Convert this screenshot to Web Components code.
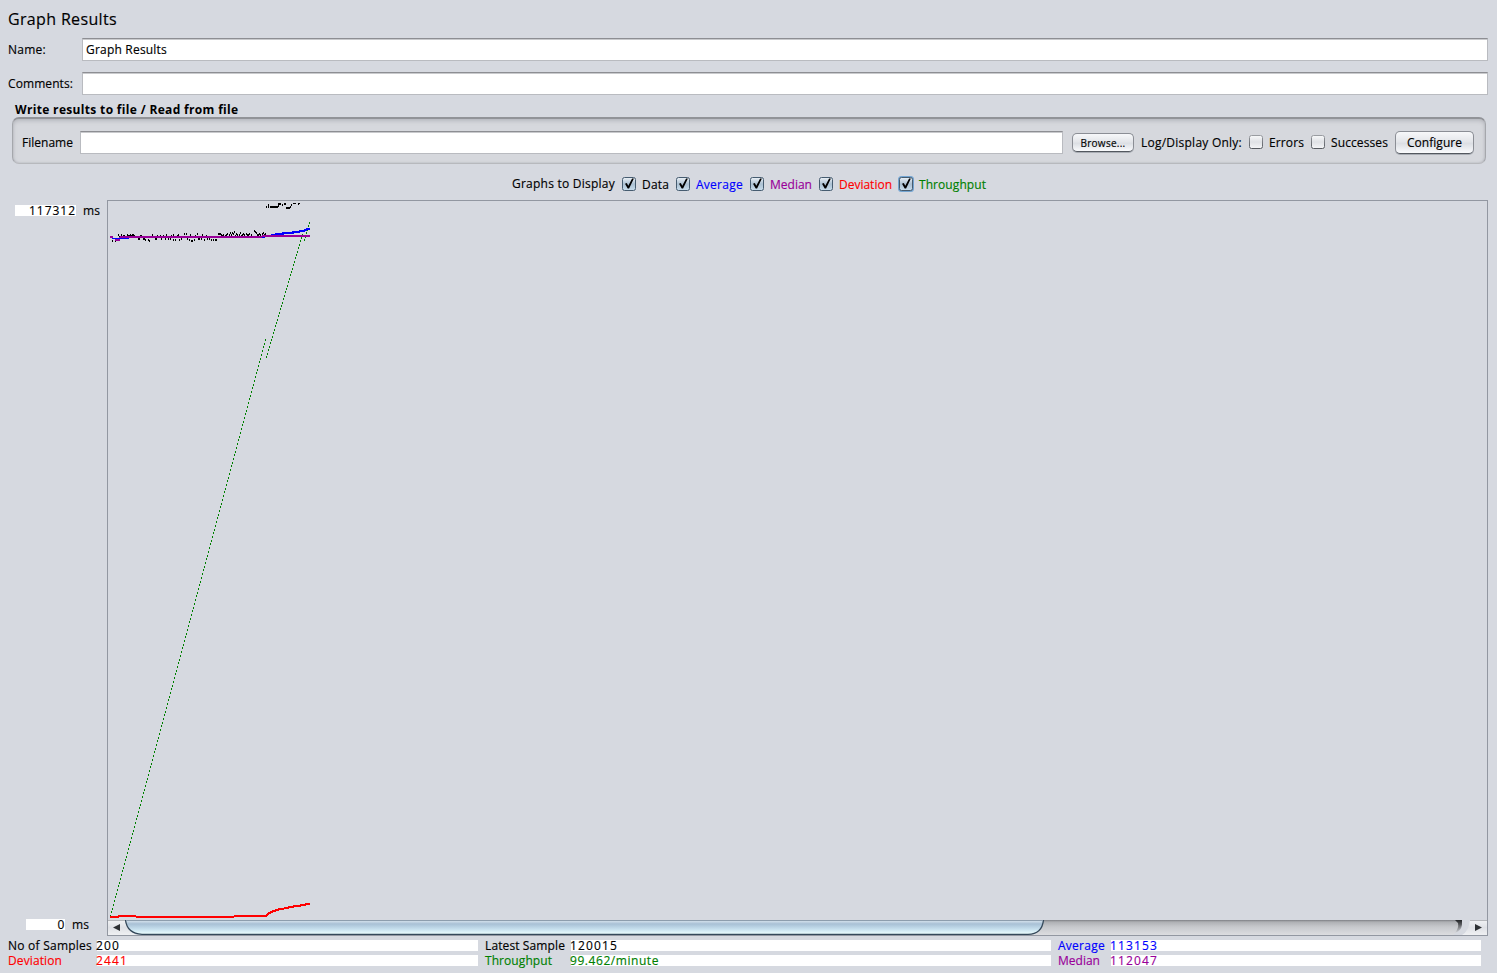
<!DOCTYPE html>
<html lang="en">
<head>
<meta charset="utf-8">
<title>Graph Results</title>
<style>
html,body{margin:0;height:100%;background:#d6d9e0;overflow:hidden}
body{font:12px/16px "Open Sans","Noto Sans",sans-serif;color:#000}
</style>
</head>
<body>
<results-panel></results-panel>
<script>
const define = (name, html, setup) => customElements.define(name, class extends HTMLElement {
  connectedCallback() {
    if (this.shadowRoot) return;
    const root = this.attachShadow({mode: 'open'});
    const t = document.createElement('template');
    t.innerHTML = html;
    root.append(t.content.cloneNode(true));
    if (setup) setup(this, root);
  }
});

/* Text label whose letter spacing is spread over a given width. */
define('fit-text', `<style>
:host{display:block;white-space:pre;flex:none;-webkit-text-stroke:.15px currentColor}
span{display:inline-block}
</style><span><slot></slot></span>`, (el, root) => {
  const w = +el.getAttribute('w');
  const span = root.querySelector('span');
  const n = el.textContent.length;
  const natural = span.getBoundingClientRect().width;
  span.style.letterSpacing = ((w - natural) / n).toFixed(3) + 'px';
  el.style.width = w + 'px';
});

define('text-field', `<style>
:host{display:flex;box-sizing:border-box;height:23px;align-items:center;background:#fff;border:1px solid #b9bbc0;border-top-color:#8d8e93;box-shadow:inset 0 1px 0 #c9cacd;padding:0 0 0 3px;min-width:0}
</style><slot></slot>`);

define('push-button', `<style>
:host{display:flex;box-sizing:border-box;align-items:center;justify-content:center;border:1px solid #8b8e95;border-bottom-color:#53585f;border-radius:5px;background:linear-gradient(#f7f8fa,#e4e6ea 45%,#dcdfe4 55%,#fafbfd);box-shadow:0 1px 0 #a9adb4;flex:none}
</style><slot></slot>`);

define('check-box', `<style>
:host{display:block;width:15px;height:15px;flex:none}
svg{display:block;overflow:visible}
.on,.ring{display:none}
:host([checked]) .on{display:inline}
:host([focused]) .ring{display:inline}
:host([checked]) .off{display:none}
</style><svg width="15" height="15" viewBox="0 0 15 15">
<defs><linearGradient id="a" x2="0" y2="1"><stop stop-color="#f8f9fa"/><stop offset=".5" stop-color="#dfe1e5"/><stop offset="1" stop-color="#f4f5f7"/></linearGradient>
<linearGradient id="b" x2="0" y2="1"><stop stop-color="#edf2f7"/><stop offset=".5" stop-color="#abc0d2"/><stop offset="1" stop-color="#c9deed"/></linearGradient>
<linearGradient id="c" x2="0" y2="1"><stop stop-color="#999ca1"/><stop offset="1" stop-color="#565a60"/></linearGradient></defs>
<rect class="ring" x="-1" y="-1" width="16" height="16" rx="3.5" fill="#73a4d1"/>
<rect class="off" x=".5" y=".5" width="13" height="13" rx="2" fill="url(#a)" stroke="url(#c)"/>
<g class="on"><rect x=".5" y=".5" width="13" height="13" rx="2" fill="url(#b)" stroke="#465c70"/>
<path d="M3 6.8 4.8 6 6.3 8.8 10.1 1.4H11.9L7.1 11.6H5.7Z" fill="#000"/></g></svg>`);

define('results-header', `<style>
:host{display:block;padding:9px 9px 0 8px}
.title{font-size:16px;line-height:20px;height:29px}
.row{display:flex;height:23px;margin-bottom:11px;align-items:center}
.row fit-text.l{margin-right:auto}
.row text-field{width:1406px}
</style>
<div class="title"><fit-text w="109">Graph Results</fit-text></div>
<div class="row"><fit-text class="l" w="38">Name:</fit-text><text-field><fit-text w="81">Graph Results</fit-text></text-field></div>
<div class="row"><fit-text class="l" w="65">Comments:</fit-text><text-field></text-field></div>`);

define('file-panel', `<style>
:host{display:flow-root;height:61px;margin:-4px 11px 0 12px}
.t{font-weight:700;padding-left:3px;height:15px;line-height:16px}
.t fit-text{-webkit-text-stroke:0}
.box{display:flex;align-items:center;box-sizing:border-box;height:47px;padding:3px 11px 0 9px;border:1px solid #a5a7ac;border-top:2px solid #919398;border-bottom-color:#b7b9bd;border-radius:7px;background:#d6d8dd;box-shadow:inset 0 2px 4px #b7b9bf,inset 0 0 2px #b0b2b7}
.box>text-field{width:983px;margin:0 9px 0 7px}
</style>
<div class="t"><fit-text w="223.5">Write results to file / Read from file</fit-text></div>
<div class="box"><fit-text w="51">Filename</fit-text><text-field></text-field>
<push-button style="width:62px;height:19px;font-size:10px"><fit-text w="45">Browse...</fit-text></push-button>
<fit-text w="101" style="margin:0 7px">Log/Display Only:</fit-text>
<check-box></check-box><fit-text w="35" style="margin:0 7px 0 5px">Errors</fit-text>
<check-box></check-box><fit-text w="57" style="margin:0 7px 0 5px">Successes</fit-text>
<push-button style="width:79px;height:23px"><fit-text w="55">Configure</fit-text></push-button></div>`);

define('series-toggles', `<style>
:host{display:flex;height:18px;align-items:center;padding:12px 0 0 512px}
.lead{margin:-1px 7px 0 0}
.i{margin:1px 7px 0 5px}
</style>
<fit-text class="lead" w="103">Graphs to Display</fit-text>
<check-box checked></check-box><fit-text class="i" w="27">Data</fit-text>
<check-box checked></check-box><fit-text class="i" w="47" style="color:#00f">Average</fit-text>
<check-box checked></check-box><fit-text class="i" w="42" style="color:#909">Median</fit-text>
<check-box checked></check-box><fit-text class="i" w="53" style="color:red">Deviation</fit-text>
<check-box checked focused></check-box><fit-text class="i" w="67" style="color:#008000">Throughput</fit-text>`);

define('sample-plot', `<style>:host{display:block;height:719px}svg{display:block}</style>
<svg width="1379" height="719" viewBox="108 201 1379 719" shape-rendering="crispEdges">
<path id="data"/><path id="tp" fill="#008000"/>
<path d="M110 236h3v2h-3zM114 238h2v1h-2zM115 239h5v2h-5zM119 237h2v1h-2zM120 236h143v2H120z" fill="#909"/>
<path d="M112 238h17v1h-17zM262 237h3v1h-3zM271 234h7v1h-7zM275 233h9v2h-9zM282 232h6v2h-6zM287 232h7v2h-7zM292 231h8v2h-8zM299 230h6v2h-6zM304 229h3v2h-3zM306 228h4v2h-4z" fill="#00f"/>
<path d="M262 235h48v2h-48z" fill="#909"/>
<path d="M110 916h9v2h-9zM118 915h18v2h-18zM136 916h98v2h-98zM234 915h33v2h-33zM266 914h2v2h-2zM267 913h2v2h-2zM268 912h3v2h-3zM270 911h3v2h-3zM272 910h4v2h-4zM275 909h4v2h-4zM278 908h6v2h-6zM284 907h5v2h-5zM288 906h6v2h-6zM293 905h8v2h-8zM300 904h6v2h-6zM305 903h5v2h-5z" fill="red"/>
</svg>`, (el, root) => {
  const dot = (x, y) => `M${x} ${y}h1v2h-1z`;
  const d = [[112,240],[115,240],[118,234],[119,236],[121,234],[122,236],[123,235],[124,235],[126,236],[127,234],[128,235],[129,235],[130,234],[131,235],[132,234],[133,234],[134,235],[138,238],[139,238],[140,235],[141,235],[143,238],[144,238],[145,239],[148,239],[149,240],[152,234],[155,238],[156,238],[157,235],[160,235],[161,238],[163,235],[165,238],[166,234],[168,238],[170,238],[171,235],[173,234],[173,239],[175,239],[177,235],[178,234],[179,239],[181,238],[184,233],[186,233],[187,238],[189,239],[190,234],[191,240],[192,240],[194,239],[195,235],[197,233],[198,238],[199,238],[201,238],[202,234],[204,239],[206,235],[207,238],[209,238],[211,239],[212,236],[213,239],[215,239],[216,239],[218,233],[219,233],[220,233],[221,234],[222,235],[223,234],[225,235],[226,234],[227,233],[229,234],[230,232],[231,234],[232,232],[233,233],[234,231],[235,235],[236,233],[237,234],[239,234],[240,232],[241,235],[242,234],[243,233],[244,234],[246,233],[247,234],[248,234],[249,233],[251,234],[254,230],[255,231],[256,232],[257,234],[258,234],[259,233],[260,234],[262,233],[263,232],[264,234],[265,233],
  [266,206],[268,204],[268,206],[278,203],[279,203],[280,203],[278,205],[282,204],[284,203],[285,203],[290,206],[291,204],[298,203]];
  for (let x = 270; x < 278; x++) d.push([x, 206]);
  for (let x = 286; x < 290; x++) d.push([x, 207]);
  root.getElementById('data').setAttribute('d', d.map(p => dot(...p)).join('') + 'M293 203h3v1h-3zM298 203h2v1h-2z');
  let t = '';
  for (let x = 110; x <= 265; x++) t += dot(x, Math.round(915 - (x - 110) * 3.716));
  for (let x = 266; x <= 303; x++) t += dot(x, Math.round(356 - (x - 266) * 3.4));
  for (let x = 304; x <= 309; x++) t += dot(x, Math.round(239 - (x - 304) * 3.4));
  root.getElementById('tp').setAttribute('d', t);
});

define('scroll-track', `<style>:host{display:block;height:15px}svg{display:block}</style>
<svg width="1379" height="15" viewBox="0 0 1379 15">
<defs><linearGradient id="t" x2="0" y2="1"><stop stop-color="#7d7f84"/><stop offset=".13" stop-color="#aeb0b4"/><stop offset=".45" stop-color="#c6c8cc"/><stop offset="1" stop-color="#dcdde0"/></linearGradient>
<linearGradient id="h" x2="0" y2="1"><stop stop-color="#dce8f2"/><stop offset=".18" stop-color="#c8d8e6"/><stop offset=".32" stop-color="#a8c0d5"/><stop offset=".65" stop-color="#c5deed"/><stop offset="1" stop-color="#edffff"/></linearGradient>
<linearGradient id="b" x2="0" y2="1"><stop stop-color="#f2f3f5"/><stop offset=".5" stop-color="#dfe1e6"/><stop offset="1" stop-color="#eff0f2"/></linearGradient>
<linearGradient id="e" x2="0" y2="1"><stop stop-color="#25272a"/><stop offset="1" stop-color="#25272a" stop-opacity="0"/></linearGradient></defs>
<path d="M900 0H1354Q1354 9 1345 15H900Z" fill="url(#t)"/>
<path d="M1347 0H1354V5Q1353 11 1347 13Q1351 8 1350 3Z" fill="url(#e)"/>
<path d="M0 0H17Q18 9 28 15H0Z" fill="url(#b)"/><path d="M1362 0H1379V15H1354Q1361 11 1362 0Z" fill="url(#b)"/>
<path d="M17.5 -1H935.5V0Q934 14.3 920 14.3H34Q19 13.5 17.5 0Z" fill="url(#h)" stroke="#34485a" stroke-width="1.3"/>
<path d="M18 .5H935" stroke="#8d9dad"/>
<path d="M5 7.5 12 4V11ZM1374 7.5 1367 4V11Z" fill="#2d3033"/>
<path d="M0 .5H17M1362 .5H1379" stroke="#b5b7bb"/>
</svg>`);

define('graph-area', `<style>
:host{display:flex;height:736px;margin-top:7px}
.axis{width:107px;display:flex;flex-direction:column;justify-content:space-between;flex:none;box-sizing:border-box;padding:2px 0 2px}
.v{display:flex;align-items:flex-start;height:18px}
.v>fit-text{margin-top:1px}
.n{height:11px;background:#fff;display:flex;justify-content:flex-end;align-items:flex-start;margin:3px 7px 0 0}
.n fit-text{margin-top:-2px}
.plot{width:1379px;border:1px solid #9297a1}
</style>
<div class="axis"><div class="v"><div class="n" style="width:61px;margin-left:15px"><fit-text w="47">117312</fit-text></div><fit-text w="17">ms</fit-text></div>
<div class="v"><div class="n" style="width:39px;margin-left:26px"><fit-text w="7.5">0</fit-text></div><fit-text w="17">ms</fit-text></div></div>
<div class="plot"><sample-plot></sample-plot><scroll-track></scroll-track></div>`);

define('stat-line', `<style>
:host{display:grid;grid-template-columns:88px 382px 7px 85px 481px 7px 52px 371px;height:15px;align-items:start;padding-left:8px}
</style><slot></slot>`);

define('summary-stats', `<style>
:host{display:block;padding-top:2px}
.v{background:linear-gradient(#fff,#fff) 1px 0 no-repeat;height:11px;display:flex;align-items:flex-start;margin-top:2px}
.v fit-text{margin-top:-2px}
</style>
<stat-line><fit-text w="84">No of Samples</fit-text><div class="v"><fit-text w="24">200</fit-text></div><i></i>
<fit-text w="80">Latest Sample</fit-text><div class="v"><fit-text w="48">120015</fit-text></div><i></i>
<fit-text w="47" style="color:#00f">Average</fit-text><div class="v" style="color:#00f"><fit-text w="48">113153</fit-text></div></stat-line>
<stat-line><fit-text w="54" style="color:red">Deviation</fit-text><div class="v" style="color:red"><fit-text w="32">2441</fit-text></div><i></i>
<fit-text w="67" style="color:#008000">Throughput</fit-text><div class="v" style="color:#008000"><fit-text w="89">99.462/minute</fit-text></div><i></i>
<fit-text w="42" style="color:#909">Median</fit-text><div class="v" style="color:#909"><fit-text w="48">112047</fit-text></div></stat-line>`);

define('results-panel', `<style>:host{display:flex;flex-direction:column;width:1497px;height:973px;overflow:hidden}
:host>*{flex:none}</style>
<results-header></results-header><file-panel></file-panel><series-toggles></series-toggles><graph-area></graph-area><summary-stats></summary-stats>`);
</script>
</body>
</html>
